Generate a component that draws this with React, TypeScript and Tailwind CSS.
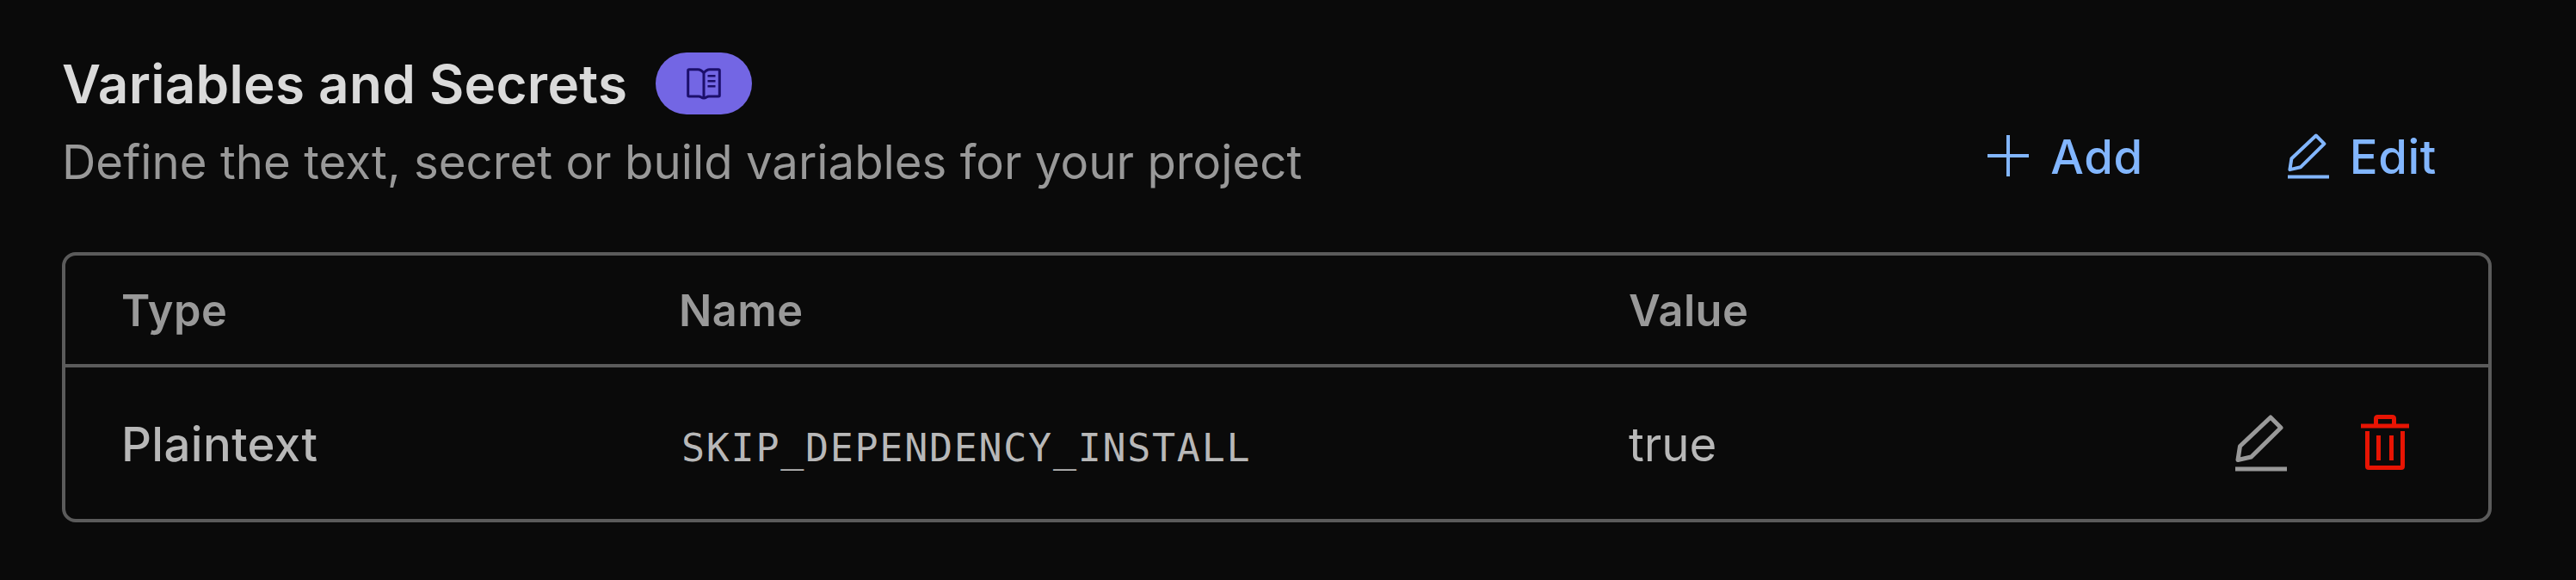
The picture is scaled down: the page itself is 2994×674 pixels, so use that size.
// Variables and Secrets panel for the project settings page
import type { ReactNode } from 'react'

interface Variable {
  type: string
  name: string
  value: string
}

const variables: Variable[] = [
  { type: 'Plaintext', name: 'SKIP_DEPENDENCY_INSTALL', value: 'true' },
]

const columns = 'grid grid-cols-[648px_1104px_1fr_auto] items-center'

function BookIcon({ className }: { className: string }) {
  return (
    <svg className={className} viewBox="0 0 40 37" fill="none" stroke="currentColor" strokeWidth="3" strokeLinejoin="round">
      <path d="M20 6C18 3 16 1.7 13 1.7H3Q1.7 1.7 1.7 3V32Q1.7 33 3 33H14C17 33 17 35 20 35C23 35 23 33 26 33H37Q38.3 33 38.3 32V3Q38.3 1.7 37 1.7H27C24 1.7 22 3 20 6ZM20 6V35" />
      <path d="M24.5 9.3H33.5M24.5 15.3H33.5M24.5 21.3H33.5" strokeWidth="2.6" />
    </svg>
  )
}

function PlusIcon({ className }: { className: string }) {
  return (
    <svg className={className} viewBox="0 0 48 48" stroke="currentColor" strokeWidth="4">
      <path d="M24 0V48M0 24H48" />
    </svg>
  )
}

function PencilIcon({ className }: { className: string }) {
  return (
    <svg className={className} viewBox="0 0 60 66" fill="none" stroke="currentColor" strokeWidth="5" strokeLinejoin="round">
      <path d="M41 3L53 15L18.5 49L3 52.5L5.5 36.5Z" />
      <path d="M0 63H60" />
    </svg>
  )
}

function TrashIcon({ className }: { className: string }) {
  return (
    <svg className={className} viewBox="0 0 56 64" fill="none" stroke="currentColor" strokeWidth="5" strokeLinejoin="round">
      <path d="M0 13H56M17.5 13V4.5Q17.5 2.5 19.5 2.5H36.5Q38.5 2.5 38.5 4.5V13" />
      <path d="M7.5 19V60Q7.5 61.5 9 61.5H47Q48.5 61.5 48.5 60V19M20.5 24V53M35.5 24V53" />
    </svg>
  )
}

function ActionButton({ icon, children }: { icon: ReactNode; children: ReactNode }) {
  return (
    <button className="flex items-center text-[54.5px] leading-[64px] font-medium tracking-[0.6px] text-[#82b6ff]">
      {icon}
      {children}
    </button>
  )
}

export default function App() {
  return (
    <div className="h-[674px] w-[2994px] overflow-hidden bg-[#0a0a0a] px-[72px] pt-[57px] font-['Inter',sans-serif]">
      <div className="flex h-[236px] justify-between">
        <div>
          <div className="flex h-20 items-center gap-[33px]">
            <h2 className="pt-0.5 text-[62px] leading-20 font-semibold tracking-[0.26px] text-[#dadada]">Variables and Secrets</h2>
            <span className="flex h-[72px] w-28 items-center justify-center rounded-full bg-[#7366e4] text-[#1c0f6b]">
              <BookIcon className="h-[37px] w-10" />
            </span>
          </div>
          <p className="mt-[17px] text-[54.5px] leading-[68px] tracking-[0.03px] text-[#999999]">
            Define the text, secret or build variables for your project
          </p>
        </div>
        <div className="mt-[93px] mr-[90px] flex items-start gap-[168px]">
          <ActionButton icon={<PlusIcon className="mr-[25px] mb-0.5 size-12" />}>Add</ActionButton>
          <ActionButton icon={<PencilIcon className="mr-[24px] mb-0.5 h-[53px] w-12" />}>Edit</ActionButton>
        </div>
      </div>

      <div className="h-[314px] w-[2824px] rounded-[16px] border-4 border-[#5b5b5b]">
        <div className={`${columns} h-[130px] border-b-4 border-[#5b5b5b] pt-0.5 pl-[65px] text-[50.5px] font-semibold tracking-[0.5px] text-[#999999]`}>
          <span>Type</span>
          <span>Name</span>
          <span>Value</span>
        </div>
        {variables.map(variable => (
          <div key={variable.name} className={`${columns} h-[176px] pr-[92px] pl-[65px] text-[54.5px] text-[#b8b8b8]`}>
            <span className="pt-1 font-medium tracking-[0.4px]">{variable.type}</span>
            <span className="pt-3 pl-[3px] font-['DejaVu_Sans_Mono',monospace] text-[45px] tracking-[1.7px]">{variable.name}</span>
            <span className="pt-1">{variable.value}</span>
            <div className="flex items-center gap-[86px]">
              <PencilIcon className="h-[66px] w-[60px] text-[#999999]" />
              <TrashIcon className="mb-0.5 h-16 w-14 text-[#e81403]" />
            </div>
          </div>
        ))}
      </div>
    </div>
  )
}
